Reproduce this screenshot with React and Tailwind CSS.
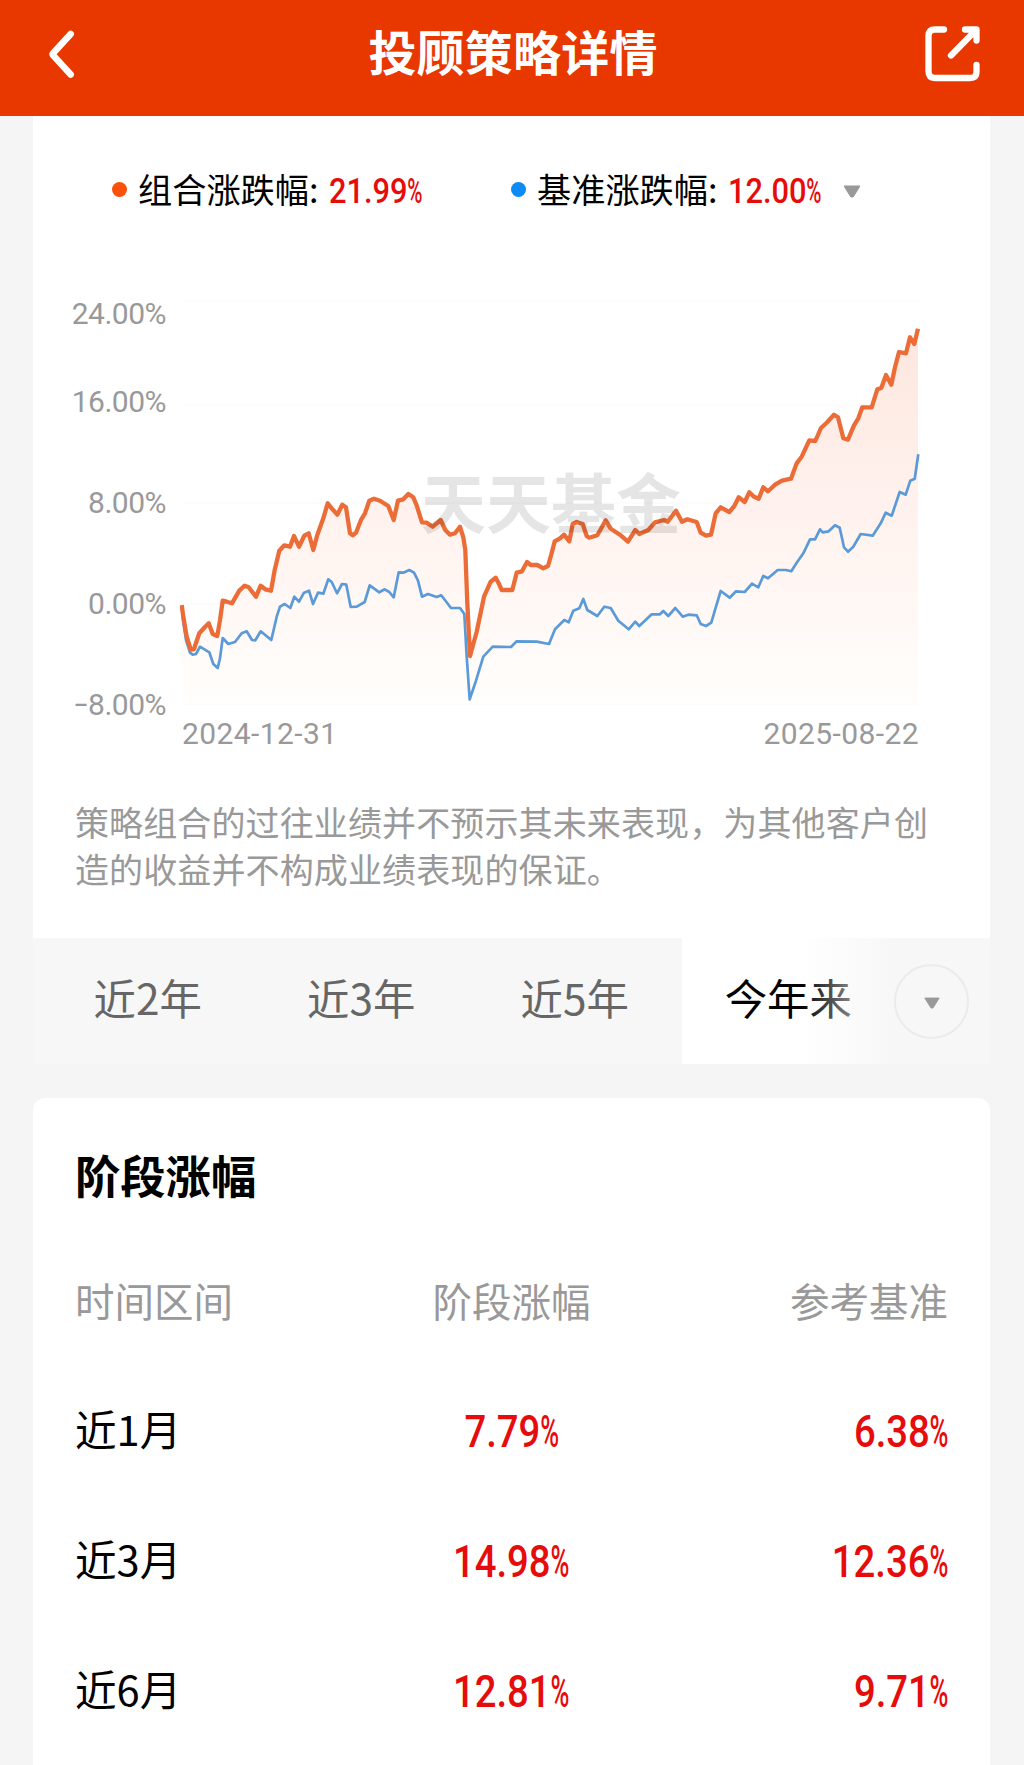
import React, { useState } from "react";

const portfolioPoints = [
  [181.7, 605], [183.3, 616.7], [186.7, 636.7], [190.7, 649.5], [194, 649], [199.3, 633.3], [204.3, 627.7], [208.7, 623.3],
  [212.7, 634], [217.3, 636], [220, 620], [222.7, 600.7], [226.7, 601.7], [232, 603.3], [239.3, 590.7], [244.7, 585.7],
  [248.7, 587.3], [256, 596.7], [260.7, 585.7], [265.3, 589.3], [271, 590.7], [274.7, 570], [279.3, 550.7], [284.3, 545.3],
  [290, 546.7], [294, 536], [299, 546.7], [304.3, 535.7], [308.7, 533.3], [313.3, 550], [317.3, 535], [323.3, 518.3],
  [327.7, 503.3], [331.7, 508.3], [337.3, 514.7], [342.3, 504.7], [346, 507.3], [350, 533.3], [352.7, 535.3], [356, 532.7],
  [361.3, 519.3], [365, 513.3], [369.3, 500.7], [374, 498.7], [380, 500.7], [388.3, 506], [393.7, 520], [398, 500.7],
  [403.3, 499.3], [408.3, 494], [413.3, 497.3], [416.5, 505], [422, 522.3], [426.7, 522.7], [432.7, 526.7], [440.7, 520],
  [445.3, 530], [450, 534.7], [455, 533.3], [460, 526.7], [463.3, 537.3], [465.3, 550], [467.3, 603], [470, 656],
  [476.7, 631.7], [484, 596.7], [490.7, 581.7], [495.7, 577.7], [498.7, 583.3], [501.7, 590], [507.3, 590], [512.3, 590],
  [516.7, 572.7], [522, 571.3], [527, 562], [530.7, 565], [537.3, 565], [543.3, 568.3], [548, 566], [550.7, 556.7],
  [554.7, 541.3], [560, 538.3], [564, 534.7], [569.3, 541.3], [572.7, 524], [576.7, 522], [582.7, 524], [586.7, 536],
  [589.3, 537.7], [597.3, 535.3], [600.7, 529.3], [605.7, 520.3], [610.7, 528.7], [620.7, 535.3], [628, 541.7], [635.3, 530],
  [639.3, 534], [648.3, 530], [655, 522.3], [664, 520], [667.7, 521.7], [676, 510.7], [682, 521.7], [687.3, 519.3],
  [696.7, 522], [700.7, 532.7], [706, 535.7], [711, 534.7], [715.7, 513.3], [720.7, 507.3], [729.3, 512], [734.3, 506],
  [738.7, 497.3], [744.7, 502], [749.3, 492.3], [754, 496.7], [758.7, 498.7], [763.3, 487.3], [768, 491.3], [775, 484.7],
  [782, 480.7], [791, 478.7], [796.7, 463.3], [801.7, 456.7], [809.3, 440.3], [815.3, 441], [821, 428], [826.7, 422.7],
  [834, 414.7], [838, 417.3], [843.3, 438.3], [848, 439.7], [854, 425.3], [858.3, 418.3], [862.3, 407.3], [871.7, 407.3],
  [877.3, 389.3], [881.3, 388], [886, 375], [891.3, 384.7], [895, 367.3], [899, 352], [906, 353.3], [910, 337.3],
  [914.3, 344], [918, 328.7],
];

const benchmarkPoints = [
  [182, 608], [183, 620], [186, 640], [190, 652.7], [192.7, 654.7], [196, 654], [200, 646.7], [209.3, 652.3], [213.3, 664],
  [217.7, 668], [220, 658.3], [222.7, 638], [228.3, 644], [235, 642], [241.7, 633.3], [246.7, 631.3], [252, 640],
  [255.3, 640.3], [260.7, 631.3], [271.3, 640], [276.7, 616.7], [280, 606.7], [284.7, 604], [290.3, 608], [294.3, 596.7],
  [299, 601.7], [304, 592.7], [309, 590.7], [313, 604], [318, 592.7], [323.3, 593.7], [328.3, 579.3], [331.7, 582],
  [337, 593.3], [342, 584], [346.3, 584.7], [350.7, 607], [356.7, 606.7], [364.7, 602], [369.7, 585.3], [379.3, 592.3],
  [384.7, 589.3], [389.3, 592], [393.7, 597.3], [398.7, 572.3], [403.3, 572.7], [409.3, 570], [414, 572.7], [418, 580.7],
  [422, 596.7], [428, 594], [436.7, 597], [441.3, 595.3], [451, 608], [460, 608], [464.3, 614], [466.7, 656.7],
  [469.7, 699.3], [476, 680.7], [483.3, 656.7], [492.7, 646.7], [511, 647], [516.7, 641.3], [536.7, 641.7], [549, 644],
  [555, 629.3], [564.3, 620], [568.7, 622.3], [573.3, 610.7], [579.3, 608.3], [583.3, 599], [587.3, 610], [597.3, 616],
  [604.3, 606.7], [610.7, 608], [618.3, 620.7], [628.7, 629.3], [635.3, 621.7], [639.3, 626], [651.7, 614.3], [660, 614.3],
  [663.3, 611], [668.3, 616], [675.3, 608], [682.7, 616.7], [688.3, 614.7], [696.7, 615.3], [700.7, 624], [706, 626],
  [711.3, 622.7], [715.7, 607.7], [720.7, 591], [729.7, 597.7], [736, 591.3], [744.7, 592], [752, 583.7], [758.3, 587.3],
  [763.3, 576], [768, 578.3], [777.7, 570], [786, 570], [791.3, 571.3], [796.7, 562.7], [803.3, 553.3], [810, 539.3],
  [815, 539.3], [820, 529.3], [822.7, 532.3], [828.7, 531.3], [835, 525.3], [839.7, 527.7], [844, 547.3], [848, 551.7],
  [853.3, 546.7], [860.7, 534], [872.7, 535.7], [880.7, 523.3], [885.7, 512.7], [891.7, 515.7], [899.7, 492],
  [905.7, 494.7], [910.3, 480.7], [914.7, 478.7], [918.3, 454.3],
];

const gridLines = [301, 405, 503, 604, 704];

const tabs = ["近2年", "近3年", "近5年", "今年来"];

const rows = [
  { period: "近1月", change: "7.79", benchmark: "6.38" },
  { period: "近3月", change: "14.98", benchmark: "12.36" },
  { period: "近6月", change: "12.81", benchmark: "9.71" },
];

const toPoints = (points) => points.map((p) => p.join(",")).join(" ");

const Percent = ({ value, className }) => (
  <span
    className={`inline-block whitespace-nowrap scale-x-[0.88] font-['Roboto'] font-medium text-[#e60c0c] ${className}`}
  >
    {value}
    <span className="-mr-[0.25em] inline-block origin-left scale-x-[0.67]">%</span>
  </span>
);

const Caret = ({ className }) => (
  <svg viewBox="0 0 20 13" className={className}>
    <path d="M2 1h16L11.500 11.500q-1.500 1.500-3 0z" fill="currentColor" stroke="currentColor" strokeLinejoin="round" />
  </svg>
);

const Header = () => (
  <header className="flex h-[116px] items-start justify-between bg-[#e83800] pr-[42px] pl-[46px] text-white">
    <svg viewBox="0 0 32 56" className="mt-[27px] h-[56px] w-[32px]" fill="none" stroke="currentColor" strokeWidth="6.600" strokeLinecap="round" strokeLinejoin="round">
      <path d="M24.700 7 7.300 26q-1.200 1.300 0 2.600L24.700 47.600" />
    </svg>
    <h1 className="mt-[14px] pl-[24px] text-[48px] leading-[72px] font-bold tracking-[0.2px]">投顾策略详情</h1>
    <svg viewBox="0 0 58 58" className="mt-[25px] h-[58px] w-[58px]" fill="none" stroke="currentColor" strokeWidth="6.300" strokeLinecap="round" strokeLinejoin="round">
      <path d="M20 4.500H11Q4.500 4.500 4.500 11V46Q4.500 53 11 53H46Q52.500 53 52.500 47V40" />
      <path d="M41 4.500H52.500V15.500M51 6 27 30.500" />
    </svg>
  </header>
);

const LegendItem = ({ label, value, dot }) => (
  <div className="flex items-center">
    <span className={`mt-[2px] h-[15px] w-[15px] rounded-full ${dot}`} />
    <span className="ml-[11px] w-[191px] pb-[2px] text-[34.200px] leading-[42px] text-black">{label}:</span>
    <Percent value={value} className="mt-[7px] w-[102px] origin-left text-[35px] leading-[40px]" />
  </div>
);

const Chart = () => (
  <svg viewBox="180 290 742 420" className="h-[420px] w-[742px]">
    <defs>
      <linearGradient id="area" gradientUnits="userSpaceOnUse" x1="0" y1="320" x2="0" y2="704">
        <stop offset="0" stopColor="#fde6dd" />
        <stop offset="0.5" stopColor="#fff2ee" />
        <stop offset="1" stopColor="#fffefc" />
      </linearGradient>
    </defs>
    {gridLines.map((y) => (
      <line key={y} x1="183" x2="918" y1={y} y2={y} stroke="#fcfcfc" strokeWidth="2" />
    ))}
    <polygon points={`182,704 ${toPoints(portfolioPoints)} 918,704`} fill="url(#area)" />
    <polyline points={toPoints(benchmarkPoints)} fill="none" stroke="#5b9ad9" strokeWidth="2.700" strokeLinejoin="round" />
    <polyline points={toPoints(portfolioPoints)} fill="none" stroke="#ec6c38" strokeWidth="4.300" strokeLinejoin="round" />
    <text x="421" y="528" fontSize="65" fontWeight="700" fill="#000" fillOpacity="0.1">天天基金</text>
  </svg>
);

const PerformanceCard = () => (
  <section className="h-[822px] bg-white">
    <div className="flex items-center pt-[49px] pl-[79px]">
      <LegendItem label="组合涨跌幅" value="21.99" dot="bg-[#fb500c]" />
      <div className="ml-[80px] flex items-center">
        <LegendItem label="基准涨跌幅" value="12.00" dot="bg-[#0d8bf5]" />
        <Caret className="mt-[6px] ml-[12px] h-[13px] w-[20px] text-[#999]" />
      </div>
    </div>
    <div className="mt-[78px] flex h-[420px] text-[#999]">
      <div className="w-[133px] pt-[4px] text-right font-['Roboto'] text-[30px] leading-[40px] tracking-[-0.500px]">
        <div>24.00%</div>
        <div className="mt-[48px]">16.00%</div>
        <div className="mt-[61px]">8.00%</div>
        <div className="mt-[61px]">0.00%</div>
        <div className="mt-[61px]">
          <span className="inline-block origin-right scale-x-75">–</span>8.00%
        </div>
      </div>
      <div className="ml-[14px]">
        <Chart />
      </div>
    </div>
    <div className="mt-[4px] ml-[149px] flex w-[737px] justify-between font-['Roboto'] text-[30px] leading-[40px] tracking-[0.400px] text-[#999]">
      <span>2024-12-31</span>
      <span>2025-08-22</span>
    </div>
    <p className="mt-[44px] ml-[42px] w-[862px] text-[34px] leading-[47.400px] tracking-[0.120px] text-[#999]">
      策略组合的过往业绩并不预示其未来表现，为其他客户创
      <br />
      造的收益并不构成业绩表现的保证。
    </p>
  </section>
);

const PeriodTabs = () => {
  const [active, setActive] = useState("今年来");

  return (
    <nav className="relative flex h-[126px] overflow-hidden bg-[#f7f7f7] pl-[8px]">
      {tabs.map((tab) => (
        <button
          key={tab}
          onClick={() => setActive(tab)}
          className={`h-full w-[213.500px] shrink-0 pb-[8px] text-[42.400px] ${
            tab === active ? "bg-white text-black" : "text-[#666]"
          }`}
        >
          {tab}
        </button>
      ))}
      <div className="absolute inset-y-0 right-0 flex w-[210px] items-center justify-end bg-linear-to-r from-[#f7f7f7]/0 from-10% to-[#f7f7f7] to-55% pr-[21px]">
        <button className="flex h-[75px] w-[75px] items-center justify-center rounded-full border-2 border-[#ebebeb] bg-[#f7f7f7]">
          <Caret className="mt-[3px] h-[12px] w-[18px] text-[#999]" />
        </button>
      </div>
    </nav>
  );
};

const StageCard = () => (
  <section className="mt-[34px] h-[667px] rounded-t-[12px] bg-white px-[42px] pt-[43px]">
    <h2 className="text-[45.300px] leading-[66px] font-bold text-black">阶段涨幅</h2>
    <div className="mt-[64px] grid grid-cols-3 text-[39.500px] leading-[58px] text-[#999]">
      <span>时间区间</span>
      <span className="text-center">阶段涨幅</span>
      <span className="text-right">参考基准</span>
    </div>
    <div className="mt-[36px]">
      {rows.map((row) => (
        <div key={row.period} className="grid h-[130px] grid-cols-3 items-center text-[41.600px]">
          <span className="-mt-[3px] text-black">{row.period}</span>
          <span className="mt-[4px] text-center">
            <Percent value={row.change} className="origin-center text-[43.500px]" />
          </span>
          <span className="mt-[4px] text-right">
            <Percent value={row.benchmark} className="origin-right text-[43.500px]" />
          </span>
        </div>
      ))}
    </div>
  </section>
);

const App = () => {
  return (
    <div className="h-[1765px] w-[1024px] overflow-hidden bg-[#f5f5f5] font-['Noto_Sans_CJK_SC',_sans-serif]">
      <Header />
      <main className="mr-[34px] ml-[33px]">
        <PerformanceCard />
        <PeriodTabs />
        <StageCard />
      </main>
    </div>
  );
};

export default App;
